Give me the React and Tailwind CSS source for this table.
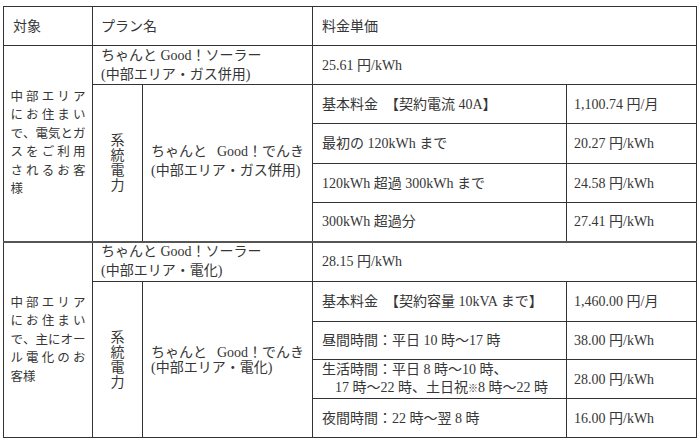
import React from "react";

const FONT = { fontFamily: '"Liberation Serif", "Noto Sans CJK JP", serif' };

function JLine({ text, justify = true }) {
  const chars = Array.from(text);
  if (!justify) {
    return <div className="h-[18.5px] text-left">{text}</div>;
  }
  return (
    <div className="flex h-[18.5px] justify-between">
      {chars.map((c, i) => (
        <span key={i}>{c}</span>
      ))}
    </div>
  );
}

function Target({ lines }) {
  return (
    <div className="mx-auto flex w-[75px] flex-col text-[12.5px] leading-[18.5px]">
      {lines.map((l, i) => (
        <JLine key={i} text={l} justify={i < lines.length - 1} />
      ))}
    </div>
  );
}

function Vertical() {
  return (
    <div className="flex flex-col items-center text-[14px] leading-[15px]">
      <span>系</span>
      <span>統</span>
      <span>電</span>
      <span>力</span>
    </div>
  );
}

const td = "border border-[#333] align-middle p-0";
const rate = "border border-[#333] align-middle pl-[9px] pr-0 py-0 whitespace-nowrap";
const price = "border border-[#333] align-middle pl-[7px] pr-0 py-0 whitespace-nowrap";

export default function App() {
  return (
    <div className="min-h-[443px] w-[700px] bg-white pl-[3px] pt-[6px] text-[#363636]" style={FONT}>
      <table className="w-[693px] table-fixed border-collapse text-[14px] leading-[19px]">
        <colgroup>
          <col className="w-[89px]" />
          <col className="w-[50px]" />
          <col className="w-[170px]" />
          <col className="w-[254px]" />
          <col className="w-[130px]" />
        </colgroup>
        <tbody>
          <tr className="h-[39px]">
            <td className={`${td} pl-[9px] text-left font-normal`}>対象</td>
            <td colSpan={2} className={`${td} pl-[8px] text-left font-normal`}>プラン名</td>
            <td colSpan={2} className={`${td} pl-[9px] text-left font-normal`}>料金単価</td>
          </tr>

          {/* group 1 */}
          <tr className="h-[39px]">
            <td rowSpan={5} className={td}>
              <Target lines={["中部エリア", "にお住まい", "で、電気とガ", "スをご利用", "されるお客", "様"]} />
            </td>
            <td colSpan={2} className={`${td} pl-[8px] pt-[1px] leading-[18.5px]`}>
              <div>ちゃんと Good！ソーラー</div>
              <div>(中部エリア・ガス併用)</div>
            </td>
            <td colSpan={2} className={rate}>25.61 円/kWh</td>
          </tr>
          <tr className="h-[39px]">
            <td rowSpan={4} className={td}>
              <Vertical />
            </td>
            <td rowSpan={4} className={`${td} pl-[8px] pb-[4px]`}>
              <div className="whitespace-nowrap">
                ちゃんと<span className="pl-[10px]">Good！でんき</span>
              </div>
              <div className="whitespace-nowrap">(中部エリア・ガス併用)</div>
            </td>
            <td className={rate}>基本料金　【契約電流 40A】</td>
            <td className={price}>1,100.74 円/月</td>
          </tr>
          <tr className="h-[40px]">
            <td className={rate}>最初の 120kWh まで</td>
            <td className={price}>20.27 円/kWh</td>
          </tr>
          <tr className="h-[39px]">
            <td className={rate}>120kWh 超過 300kWh まで</td>
            <td className={price}>24.58 円/kWh</td>
          </tr>
          <tr className="h-[39px]">
            <td className={rate}>300kWh 超過分</td>
            <td className={price}>27.41 円/kWh</td>
          </tr>

          {/* group 2 */}
          <tr className="h-[40px] border-t-2 border-t-[#555]">
            <td rowSpan={5} className={`${td} border-t-2 border-t-[#555]`}>
              <Target lines={["中部エリア", "にお住まい", "で、主にオー", "ル電化のお", "客様"]} />
            </td>
            <td colSpan={2} className={`${td} border-t-2 border-t-[#555] pl-[8px] leading-[18.5px]`}>
              <div>ちゃんと Good！ソーラー</div>
              <div>(中部エリア・電化)</div>
            </td>
            <td colSpan={2} className={`${rate} border-t-2 border-t-[#555]`}>28.15 円/kWh</td>
          </tr>
          <tr className="h-[40px]">
            <td rowSpan={4} className={td}>
              <Vertical />
            </td>
            <td rowSpan={4} className={`${td} pl-[8px]`}>
              <div className="whitespace-nowrap leading-[15px]">
                ちゃんと<span className="pl-[10px]">Good！でんき</span>
              </div>
              <div className="whitespace-nowrap leading-[15px]">(中部エリア・電化)</div>
            </td>
            <td className={rate}>基本料金　【契約容量 10kVA まで】</td>
            <td className={price}>1,460.00 円/月</td>
          </tr>
          <tr className="h-[38px]">
            <td className={rate}>昼間時間：平日 10 時～17 時</td>
            <td className={price}>38.00 円/kWh</td>
          </tr>
          <tr className="h-[39px]">
            <td className={`${rate} leading-[18px]`}>
              <div>生活時間：平日 8 時～10 時、</div>
              <div className="pl-[13px]">17 時～22 時、土日祝<span className="text-[10px]">※</span>8 時～22 時</div>
            </td>
            <td className={price}>28.00 円/kWh</td>
          </tr>
          <tr className="h-[39px]">
            <td className={rate}>夜間時間：22 時～翌 8 時</td>
            <td className={price}>16.00 円/kWh</td>
          </tr>
        </tbody>
      </table>
    </div>
  );
}
